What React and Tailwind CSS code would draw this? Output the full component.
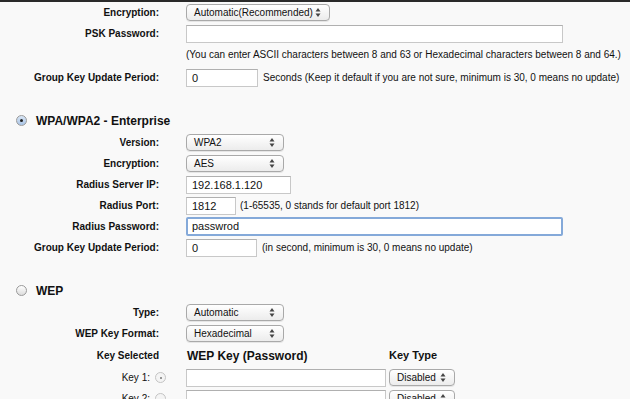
import React from "react";

const font = { fontFamily: '"Liberation Sans", Arial, Helvetica, sans-serif' };

function Arrows() {
  return (
    <svg width="6" height="9" viewBox="0 0 6 9" className="absolute right-[8px] top-[3px]">
      <path d="M3 0 L5.5 3.5 L0.5 3.5 Z" fill="#444" />
      <path d="M3 9 L5.5 5.5 L0.5 5.5 Z" fill="#444" />
    </svg>
  );
}

function Select({ value, w }) {
  return (
    <div
      className={`relative h-[17px] ${w} rounded-[4px] border border-[#a9a9a9] bg-gradient-to-b from-[#ffffff] to-[#ececec] text-[10px] leading-[15px] pl-[7px] text-[#111] shadow-[0_1px_0_rgba(0,0,0,0.08)]`}
    >
      {value}
      <Arrows />
    </div>
  );
}

function Input({ value = "", w, focused = false }) {
  return (
    <div
      className={
        focused
          ? `h-[19px] ${w} bg-white border-2 border-[#84a9d9] rounded-[2px] text-[11px] leading-[15px] pl-[4px] text-[#111]`
          : `h-[18px] ${w} bg-white border border-[#c8c8c8] border-t-[#b0b0b0] text-[11px] leading-[16px] pl-[5px] text-[#111]`
      }
    >
      {value}
    </div>
  );
}

function Radio({ checked }) {
  return (
    <div
      className={`w-[11px] h-[11px] rounded-full border border-[#9a9a9a] flex items-center justify-center ${
        checked ? "bg-gradient-to-b from-[#d9e6f5] to-[#a9c4e6]" : "bg-gradient-to-b from-[#ffffff] to-[#dcdcdc]"
      }`}
    >
      {checked && <div className="w-[3px] h-[3px] rounded-full bg-[#222]" />}
    </div>
  );
}

function Row({ label, h = "h-[21px]", children, className = "" }) {
  return (
    <div className={`flex items-center ${h} ${className}`}>
      <div className="w-[160px] shrink-0 text-right text-[10px] font-bold text-[#111] pr-[1px]">{label}</div>
      <div className="pl-[26px] flex items-center">{children}</div>
    </div>
  );
}

function Hint({ children, ml = "ml-[5px]" }) {
  return <span className={`${ml} text-[10px] text-[#111] whitespace-nowrap`}>{children}</span>;
}

export default function App() {
  return (
    <div className="w-[630px] h-[399px] overflow-hidden bg-[#f9f9f9]" style={font}>
      <div className="h-[2px] bg-[#2a2a2a]" />

      <Row label="Encryption:">
        <Select value="Automatic(Recommended)" w="w-[144px]" />
      </Row>
      <Row label="PSK Password:">
        <Input w="w-[377px]" />
      </Row>
      <Row label="" h="h-[17px]" className="pt-[3px]">
        <Hint ml="ml-0">(You can enter ASCII characters between 8 and 63 or Hexadecimal characters between 8 and 64.)</Hint>
      </Row>
      <Row label="Group Key Update Period:" className="mt-[6px]">
        <Input value="0" w="w-[72px]" />
        <Hint>Seconds (Keep it default if you are not sure, minimum is 30, 0 means no update)</Hint>
      </Row>

      <div className="flex items-center h-[23px] mt-[21px] pl-[16px]">
        <Radio checked />
        <span className="ml-[9px] text-[12px] font-bold text-[#111]">WPA/WPA2 - Enterprise</span>
      </div>
      <Row label="Version:">
        <Select value="WPA2" w="w-[98px]" />
      </Row>
      <Row label="Encryption:">
        <Select value="AES" w="w-[98px]" />
      </Row>
      <Row label="Radius Server IP:">
        <Input value="192.168.1.120" w="w-[105px]" />
      </Row>
      <Row label="Radius Port:">
        <Input value="1812" w="w-[50px]" />
        <Hint ml="ml-[4px]">(1-65535, 0 stands for default port 1812)</Hint>
      </Row>
      <Row label="Radius Password:">
        <Input value="passwrod" w="w-[377px]" focused />
      </Row>
      <Row label="Group Key Update Period:">
        <Input value="0" w="w-[71px]" />
        <Hint>(in second, minimum is 30, 0 means no update)</Hint>
      </Row>

      <div className="flex items-center h-[23px] mt-[21px] pl-[16px]">
        <Radio />
        <span className="ml-[9px] text-[12px] font-bold text-[#111]">WEP</span>
      </div>
      <Row label="Type:">
        <Select value="Automatic" w="w-[98px]" />
      </Row>
      <Row label="WEP Key Format:">
        <Select value="Hexadecimal" w="w-[98px]" />
      </Row>
      <div className="flex items-center h-[23px]">
        <div className="w-[160px] shrink-0 text-right text-[10px] font-bold text-[#111] pr-[1px]">Key Selected</div>
        <div className="pl-[27px] w-[229px] shrink-0 text-[12px] font-bold text-[#111]">WEP Key (Password)</div>
        <div className="text-[11px] font-bold text-[#111]">Key Type</div>
      </div>
      {["Key 1:", "Key 2:"].map((k, i) => (
        <div key={k} className="flex items-center h-[21px]">
          <div className="w-[150px] shrink-0 text-right text-[10px] text-[#111]">{k}</div>
          <div className="ml-[5px]">
            <div className="w-[11px] h-[11px] rounded-full border border-[#c4c4c4] bg-[#f4f4f4] flex items-center justify-center">
              {i === 0 && <div className="w-[2px] h-[2px] rounded-full bg-[#777]" />}
            </div>
          </div>
          <div className="ml-[20px]">
            <Input w="w-[200px]" />
          </div>
          <div className="ml-[3px]">
            <Select value="Disabled" w="w-[66px]" />
          </div>
        </div>
      ))}
    </div>
  );
}
